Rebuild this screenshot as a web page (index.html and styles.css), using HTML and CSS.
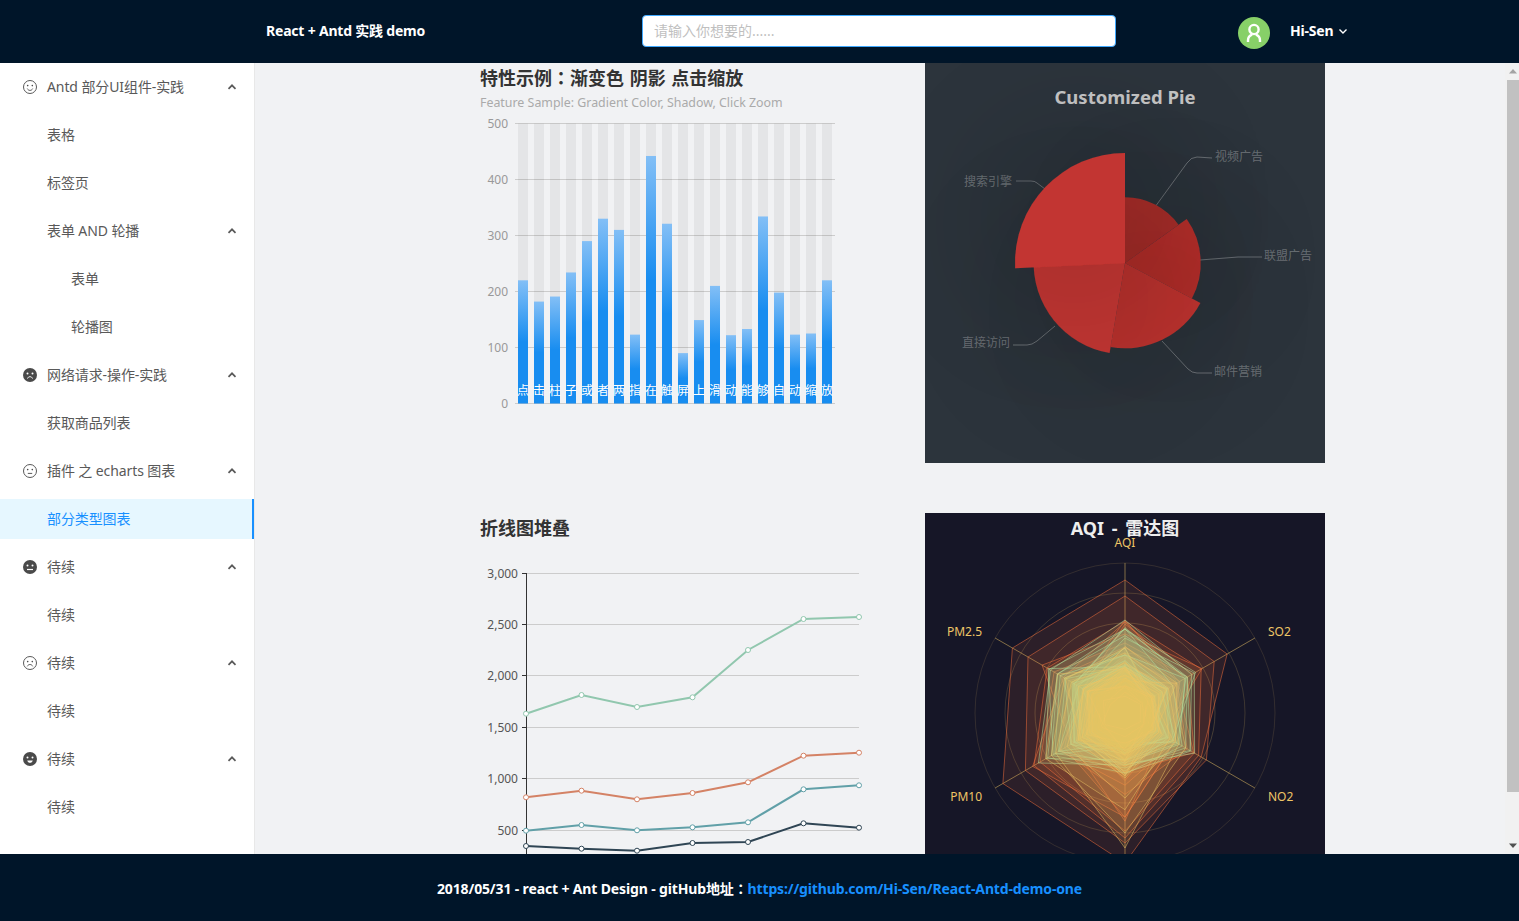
FILE: index.html
```html
<!DOCTYPE html>
<html lang="en">
<head>
    <meta charset="UTF-8">
    <meta name="viewport" content="width=device-width, initial-scale=1.0">
    <title>React + Antd 实践 demo</title>
    <link rel="stylesheet" href="styles.css">
</head>
<body>
    <svg class="sprites" width="0" height="0">
        <defs>
            <symbol id="face-smile" viewBox="0 0 14 14">
                <circle cx="7" cy="7" r="6.5" class="face-line"/>
                <circle cx="4.7" cy="5.6" r=".8" class="face-dot"/>
                <circle cx="9.3" cy="5.6" r=".8" class="face-dot"/>
                <path d="M4.3 8.6c.6 1.2 1.5 1.8 2.7 1.8s2.100-.6 2.700-1.800" class="face-line"/>
            </symbol>
            <symbol id="face-meh" viewBox="0 0 14 14">
                <circle cx="7" cy="7" r="6.5" class="face-line"/>
                <circle cx="4.7" cy="5.6" r=".8" class="face-dot"/>
                <circle cx="9.3" cy="5.6" r=".8" class="face-dot"/>
                <path d="M4.800 9.400h4.400" class="face-line"/>
            </symbol>
            <symbol id="face-frown" viewBox="0 0 14 14">
                <circle cx="7" cy="7" r="6.5" class="face-line"/>
                <circle cx="4.7" cy="5.6" r=".8" class="face-dot"/>
                <circle cx="9.3" cy="5.6" r=".8" class="face-dot"/>
                <path d="M4.300 10.300c.6-1.200 1.500-1.800 2.700-1.800s2.100.6 2.700 1.800" class="face-line"/>
            </symbol>
            <symbol id="face-frown-fill" viewBox="0 0 14 14">
                <circle cx="7" cy="7" r="7" class="face-fill"/>
                <circle cx="4.500" cy="5.500" r="1" fill="#fff"/>
                <circle cx="9.500" cy="5.500" r="1" fill="#fff"/>
                <path d="M4.500 10.500c.5-1.200 1.300-1.800 2.500-1.800s2 .6 2.500 1.800" fill="none" stroke="#fff" stroke-width="1"/>
            </symbol>
            <symbol id="face-meh-fill" viewBox="0 0 14 14">
                <circle cx="7" cy="7" r="7" class="face-fill"/>
                <circle cx="4.500" cy="5.500" r="1" fill="#fff"/>
                <circle cx="9.500" cy="5.500" r="1" fill="#fff"/>
                <path d="M4 9.500h6" fill="none" stroke="#fff" stroke-width="1.200"/>
            </symbol>
            <symbol id="face-smile-fill" viewBox="0 0 14 14">
                <circle cx="7" cy="7" r="7" class="face-fill"/>
                <circle cx="4.500" cy="5.500" r="1" fill="#fff"/>
                <circle cx="9.500" cy="5.500" r="1" fill="#fff"/>
                <path d="M4.200 8.400c.5 1.600 1.500 2.400 2.800 2.400s2.300-.8 2.800-2.400z" fill="#fff"/>
            </symbol>
            <symbol id="caret" viewBox="0 0 10 10">
                <path d="M1.500 6.800 5 3.300l3.500 3.500" fill="none" stroke="currentColor" stroke-width="1.700"/>
            </symbol>
            <filter id="pie-shadow" filterUnits="userSpaceOnUse" x="0" y="0" width="400" height="400">
                <feDropShadow dx="0" dy="0" stdDeviation="85" flood-color="#000" flood-opacity="0.5"/>
            </filter>
        </defs>
    </svg>

    <header class="topbar">
        <div class="brand">React + Antd 实践 demo</div>
        <input class="search" type="text" placeholder="请输入你想要的......">
        <div class="avatar">
            <svg viewBox="0 0 32 32" width="32" height="32">
                <circle cx="16" cy="12.500" r="4.600" fill="none" stroke="#fff" stroke-width="2.400"/>
                <path d="M10 25v-1.500c0-3 1.800-5 4.200-5.800M22 25v-1.500c0-3-1.800-5-4.200-5.800" fill="none" stroke="#fff" stroke-width="2.400"/>
            </svg>
        </div>
        <div class="user">Hi-Sen</div>
        <svg class="user-caret" viewBox="0 0 10 10" width="10" height="10"><path d="M1.500 3.500 5 7l3.500-3.500" fill="none" stroke="#fff" stroke-width="1.400"/></svg>
    </header>

    <div class="layout">
        <nav class="sider">
            <div class="menu-item">
                <svg class="menu-icon"><use href="#face-smile"/></svg><span>Antd 部分UI组件-实践</span>
                <svg class="menu-caret"><use href="#caret"/></svg>
            </div>
            <div class="menu-item sub">表格</div>
            <div class="menu-item sub">标签页</div>
            <div class="menu-item sub">表单 AND 轮播<svg class="menu-caret"><use href="#caret"/></svg></div>
            <div class="menu-item deep">表单</div>
            <div class="menu-item deep">轮播图</div>
            <div class="menu-item">
                <svg class="menu-icon"><use href="#face-frown-fill"/></svg><span>网络请求-操作-实践</span>
                <svg class="menu-caret"><use href="#caret"/></svg>
            </div>
            <div class="menu-item sub">获取商品列表</div>
            <div class="menu-item">
                <svg class="menu-icon"><use href="#face-meh"/></svg><span>插件 之 echarts 图表</span>
                <svg class="menu-caret"><use href="#caret"/></svg>
            </div>
            <div class="menu-item sub active">部分类型图表</div>
            <div class="menu-item">
                <svg class="menu-icon"><use href="#face-meh-fill"/></svg><span>待续</span>
                <svg class="menu-caret"><use href="#caret"/></svg>
            </div>
            <div class="menu-item sub">待续</div>
            <div class="menu-item">
                <svg class="menu-icon"><use href="#face-frown"/></svg><span>待续</span>
                <svg class="menu-caret"><use href="#caret"/></svg>
            </div>
            <div class="menu-item sub">待续</div>
            <div class="menu-item">
                <svg class="menu-icon"><use href="#face-smile-fill"/></svg><span>待续</span>
                <svg class="menu-caret"><use href="#caret"/></svg>
            </div>
            <div class="menu-item sub">待续</div>
        </nav>

        <main class="content">
            <div class="chart-grid">
                <svg id="barChart" class="chart" viewBox="0 0 400 400" width="400" height="400"></svg>

                <svg class="chart pie" viewBox="0 0 400 400" width="400" height="400">
                    <text x="200" y="41" class="pie-title">Customized Pie</text>
                    <g class="pie-lines">
                        <path d="M230 144 262 100Q266 94 272 94L287 95"/>
                        <path d="M275 197 313 194H337"/>
                        <path d="M237 278 263 306Q267 310 272 310H287"/>
                        <path d="M130 263 112 278Q107 282 102 282H88"/>
                        <path d="M120 126 112 120Q110 118 106 118H91"/>
                    </g>
                    <g class="pie-labels">
                        <text x="290" y="98">视频广告</text>
                        <text x="339" y="197">联盟广告</text>
                        <text x="289" y="313">邮件营销</text>
                        <text x="37" y="284">直接访问</text>
                        <text x="39" y="123">搜索引擎</text>
                    </g>
                    <path d="M200 200V134.300A65.700 65.700 0 0 1 253.500 161.800Z" fill="#b12e2b" filter="url(#pie-shadow)"/>
                    <path d="M200 200 261.700 156A75.800 75.800 0 0 1 266.900 235.500Z" fill="#b82f2c" filter="url(#pie-shadow)"/>
                    <path d="M200 200 275.400 240A85.300 85.300 0 0 1 185.600 284.100Z" fill="#bd322e" filter="url(#pie-shadow)"/>
                    <path d="M200 200 184.600 290.100A91.400 91.400 0 0 1 108.700 195.700Z" fill="#c03430" filter="url(#pie-shadow)"/>
                    <path d="M200 200 90.100 205.200A110 110 0 0 1 200 90Z" fill="#c23531" filter="url(#pie-shadow)"/>
                </svg>

                <svg class="chart" viewBox="0 0 400 400" width="400" height="400">
                    <text x="5" y="22" class="chart-title">折线图堆叠</text>
                    <g class="grid-lines">
                        <path d="M51 60.500H384M51 111.500H384M51 162.500H384M51 214.500H384M51 265.500H384M51 317.500H384"/>
                    </g>
                    <path class="axis-line" d="M51.500 60V400M47 60.500H51M47 111.500H51M47 162.500H51M47 214.500H51M47 265.500H51M47 317.500H51"/>
                    <g class="line-labels">
                        <text x="43" y="65">3,000</text>
                        <text x="43" y="116">2,500</text>
                        <text x="43" y="167">2,000</text>
                        <text x="43" y="219">1,500</text>
                        <text x="43" y="270">1,000</text>
                        <text x="43" y="322">500</text>
                    </g>
                    <g id="lineSeries"></g>
                </svg>

                <svg id="radarChart" class="chart radar" viewBox="0 0 400 400" width="400" height="400"></svg>
            </div>
        </main>

        <div class="scrollbar">
            <svg class="scroll-arrow" viewBox="0 0 12 17" width="12" height="17"><path d="M6 6 10 10.500H2z" fill="#a3a3a3"/></svg>
            <div class="scroll-thumb"></div>
            <div class="scroll-rest"></div>
            <svg class="scroll-arrow" viewBox="0 0 12 17" width="12" height="17"><path d="M2 6.500H10L6 11z" fill="#505050"/></svg>
        </div>
    </div>

    <footer class="footer">
        <span>2018/05/31 - react + Ant Design - gitHub地址<span class="cjk-colon">：</span><a href="#">https://github.com/Hi-Sen/React-Antd-demo-one</a></span>
    </footer>

    <script src="script.js"></script>
</body>
</html>
```

FILE: styles.css
```css
* {
    box-sizing: border-box;
}

html, body {
    height: 100%;
}

body {
    margin: 0;
    display: flex;
    flex-direction: column;
    overflow: hidden;
    font-family: "Noto Sans", "Noto Sans CJK SC", sans-serif;
    font-size: 14px;
    color: #595959;
    background-color: #f1f2f4;
}

.sprites {
    position: absolute;
}

.face-line {
    fill: none;
    stroke: #595959;
    stroke-width: 1;
}

.face-dot,
.face-fill {
    fill: #4a4a4a;
}

/* the colon sits mid-cell in the TC cut */
.cjk-colon {
    font-family: "Noto Sans CJK TC", sans-serif;
}

/* header */
.topbar {
    flex: 0 0 63px;
    display: flex;
    align-items: center;
    padding: 0 0 1px 266px;
    background-color: #001529;
    color: #fff;
    font-weight: bold;
    letter-spacing: -0.2px;
}

.brand {
    width: 376px;
    padding-bottom: 2px;
}

.search {
    width: 474px;
    height: 32px;
    padding: 0 11px 2px;
    border: 1px solid #40a9ff;
    border-radius: 4px;
    background-color: #fff;
    font: inherit;
    font-weight: normal;
    letter-spacing: 0;
}

.search::placeholder {
    color: #bfbfbf;
}

.avatar {
    width: 32px;
    height: 32px;
    margin: 4px 0 0 122px;
    border-radius: 50%;
    background-color: #87d068;
}

.user {
    margin-left: 20px;
    padding-bottom: 1px;
}

.user-caret {
    margin-left: 5px;
}

/* body */
.layout {
    flex: 1;
    display: flex;
    min-height: 0;
}

.sider {
    flex: 0 0 255px;
    padding-top: 4px;
    background-color: #fff;
    border-right: 1px solid #e8e8e8;
}

.menu-item {
    position: relative;
    display: flex;
    align-items: center;
    height: 40px;
    margin-bottom: 8px;
    padding: 0 0 2px 23px;
    letter-spacing: -0.1px;
}

.menu-item.sub {
    padding-left: 47px;
}

.menu-item.deep {
    padding-left: 71px;
}

.menu-item.active {
    background-color: #e6f7ff;
    border-right: 2px solid #1890ff;
    color: #1890ff;
}

.menu-icon {
    width: 14px;
    height: 14px;
    margin: 2px 10px 0 0;
}

.menu-caret {
    position: absolute;
    right: 17px;
    top: 15px;
    width: 10px;
    height: 10px;
    color: #595959;
}

.content {
    flex: 1;
    min-width: 0;
    overflow: hidden;
    padding-left: 220px;
}

.chart-grid {
    display: grid;
    grid-template-columns: 400px 400px;
    gap: 50px;
}

.chart {
    display: block;
}

.chart-title {
    font-size: 18px;
    font-weight: bold;
    fill: #333;
    word-spacing: 1px;
}

.chart-subtitle {
    font-size: 12.4px;
    fill: #aaa;
}

.grid-lines path {
    fill: none;
    stroke: #ccc;
    stroke-width: 1;
}

.axis-line {
    fill: none;
    stroke: #333;
    stroke-width: 1;
}

.bar-labels text,
.line-labels text {
    font-size: 12px;
    text-anchor: end;
}

.bar-labels text {
    fill: #999;
}

.line-labels text {
    fill: #555;
}

.bar-tag {
    font-size: 12px;
    fill: #fff;
    text-anchor: middle;
}

/* pie */
.pie {
    background-color: #2c343c;
}

.pie-title {
    font-size: 18.5px;
    font-weight: bold;
    fill: #ccc;
    text-anchor: middle;
}

.pie-lines path {
    fill: none;
    stroke: rgba(255, 255, 255, 0.3);
}

.pie-labels text {
    font-size: 12px;
    fill: rgba(255, 255, 255, 0.3);
}

/* radar */
.radar {
    background-color: #161627;
}

.radar-title {
    font-size: 18px;
    font-weight: bold;
    fill: #eee;
    text-anchor: middle;
    word-spacing: 3px;
}

.radar-label {
    font-size: 12px;
    fill: #eec566;
}

/* scrollbar */
.scrollbar {
    flex: 0 0 14px;
    display: flex;
    flex-direction: column;
    align-items: flex-end;
    background-color: #f1f1f1;
}

.scroll-thumb {
    flex: 0 0 712px;
    width: 12px;
    background-color: #c1c1c1;
}

.scroll-rest {
    flex: 1;
}

/* footer */
.footer {
    flex: 0 0 67px;
    display: flex;
    align-items: center;
    justify-content: center;
    background-color: #001529;
    color: #fff;
    font-weight: bold;
    letter-spacing: -0.14px;
}

.footer a {
    color: #1890ff;
    text-decoration: none;
}
```

FILE: script.js
```js
document.addEventListener("DOMContentLoaded", function() {
    const NS = "http://www.w3.org/2000/svg";

    function add(parent, tag, attrs, text) {
        const el = document.createElementNS(NS, tag);
        for (const key in attrs) {
            el.setAttribute(key, attrs[key]);
        }
        if (text) {
            el.textContent = text;
        }
        parent.appendChild(el);
        return el;
    }

    // bar chart
    const bar = document.getElementById("barChart");
    const barTags = "点击柱子或者两指在触屏上滑动能够自动缩放";
    const barData = [220, 182, 191, 234, 290, 330, 310, 123, 442, 321, 90, 149, 210, 122, 133, 334, 198, 123, 125, 220];

    const defs = add(bar, "defs", {});
    const grad = add(defs, "linearGradient", { id: "barFill", x1: 0, y1: 0, x2: 0, y2: 1 });
    add(grad, "stop", { offset: "0", "stop-color": "#83bff6" });
    add(grad, "stop", { offset: "0.5", "stop-color": "#188df0" });
    add(grad, "stop", { offset: "1", "stop-color": "#188df0" });

    const barTitle = add(bar, "text", { x: 5, y: 22, class: "chart-title" }, "特性示例");
    add(barTitle, "tspan", { class: "cjk-colon" }, "：");
    add(barTitle, "tspan", {}, "渐变色 阴影 点击缩放");
    add(bar, "text", { x: 5, y: 44, class: "chart-subtitle" }, "Feature Sample: Gradient Color, Shadow, Click Zoom");

    const barGrid = add(bar, "g", { class: "grid-lines" });
    const barLabels = add(bar, "g", { class: "bar-labels" });
    for (let i = 0; i <= 5; i++) {
        const y = 340.5 - i * 56;
        add(barGrid, "path", { d: "M40 " + y + "H360" });
        add(barLabels, "text", { x: 33, y: y + 4.5 }, String(i * 100));
    }

    barData.forEach(function(value, i) {
        const x = 43 + i * 16;
        const h = value * 280 / 500;
        add(bar, "rect", { x: x, y: 60.5, width: 10, height: 280, fill: "rgba(0,0,0,0.05)" });
        add(bar, "rect", { x: x, y: 340.5 - h, width: 10, height: h, fill: "url(#barFill)" });
        add(bar, "text", { x: x + 5, y: 332, class: "bar-tag" }, barTags[i]);
    });

    // line chart
    const lineGroup = document.getElementById("lineSeries");
    const lineXs = [51, 106.5, 162, 217.5, 273, 328.5, 384];
    const lines = [
        { color: "#2f4554", ys: [333, 335.7, 337.7, 330, 329, 310.3, 314.7] },
        { color: "#61a0a8", ys: [317.7, 312, 317.3, 314.3, 309.3, 276.3, 272.3] },
        { color: "#d48265", ys: [284.3, 277.7, 286.3, 280, 269.3, 242.7, 239.7] },
        { color: "#91c7ae", ys: [200.7, 182, 194, 184.3, 137, 106, 104] }
    ];
    lines.forEach(function(line) {
        const points = lineXs.map(function(x, i) { return x + "," + line.ys[i]; }).join(" ");
        add(lineGroup, "polyline", { points: points, fill: "none", stroke: line.color, "stroke-width": 2 });
        lineXs.forEach(function(x, i) {
            add(lineGroup, "circle", { cx: x, cy: line.ys[i], r: 2.5, fill: "#fff", stroke: line.color, "stroke-width": 1 });
        });
    });

    // radar chart
    const radar = document.getElementById("radarChart");
    const cx = 200, cy = 200;
    // AQI, SO2, NO2, CO, PM10, PM2.5
    const angles = [-90, -30, 30, 90, 150, 210].map(function(a) { return a * Math.PI / 180; });

    add(radar, "text", { x: 200, y: 22, class: "radar-title" }, "AQI - 雷达图");

    for (let r = 30; r <= 150; r += 30) {
        add(radar, "circle", {
            cx: cx, cy: cy, r: r, fill: "none",
            stroke: "rgba(238,197,102," + (0.36 - r * 0.0015) + ")"
        });
    }
    angles.forEach(function(a) {
        add(radar, "line", {
            x1: cx, y1: cy, x2: cx + 150 * Math.cos(a), y2: cy + 150 * Math.sin(a),
            stroke: "rgba(238,197,102,0.5)"
        });
    });

    [["AQI", 200, 34, "middle"], ["SO2", 343, 123, "start"], ["NO2", 343, 288, "start"],
     ["PM10", 57, 288, "end"], ["PM2.5", 57, 123, "end"]].forEach(function(l) {
        add(radar, "text", { x: l[1], y: l[2], "text-anchor": l[3], class: "radar-label" }, l[0]);
    });

    function polygon(radii, color) {
        const pts = radii.map(function(r, i) {
            return (cx + r * Math.cos(angles[i])).toFixed(1) + "," + (cy + r * Math.sin(angles[i])).toFixed(1);
        }).join(" ");
        add(radar, "polygon", { points: pts, fill: color, "fill-opacity": 0.1, stroke: color, "stroke-opacity": 0.5 });
    }

    // fixed seed so the picture is the same every time
    let seed = 7;
    function rand() {
        seed = (seed * 16807) % 2147483647;
        return seed / 2147483647;
    }

    // one polygon is a day: a bad day is high on every axis, with some jitter
    function cloud(count, color, peak) {
        for (let i = 0; i < count; i++) {
            const u = rand();
            const day = 0.28 + u * u * 0.72;
            polygon(peak.map(function(r) { return r * day * (0.65 + rand() * 0.7); }), color);
        }
    }

    const orange = "#F9713C", green = "#B3E4A1", yellow = "#eec566";

    polygon([133, 118, 88, 150, 141, 130], orange);
    polygon([117, 103, 94, 130, 115, 112], orange);
    polygon([92, 88, 85, 125, 105, 90], orange);
    polygon([70, 72, 80, 118, 98, 82], orange);
    cloud(27, orange, [82, 78, 74, 96, 90, 82]);

    polygon([93, 77, 75, 52, 100, 86], green);
    polygon([84, 72, 70, 55, 85, 78], green);
    cloud(29, green, [80, 72, 68, 56, 82, 78]);

    polygon([60, 55, 70, 120, 85, 70], yellow);
    polygon([50, 50, 62, 135, 80, 62], yellow);
    cloud(29, yellow, [66, 60, 60, 78, 72, 68]);
});
```
